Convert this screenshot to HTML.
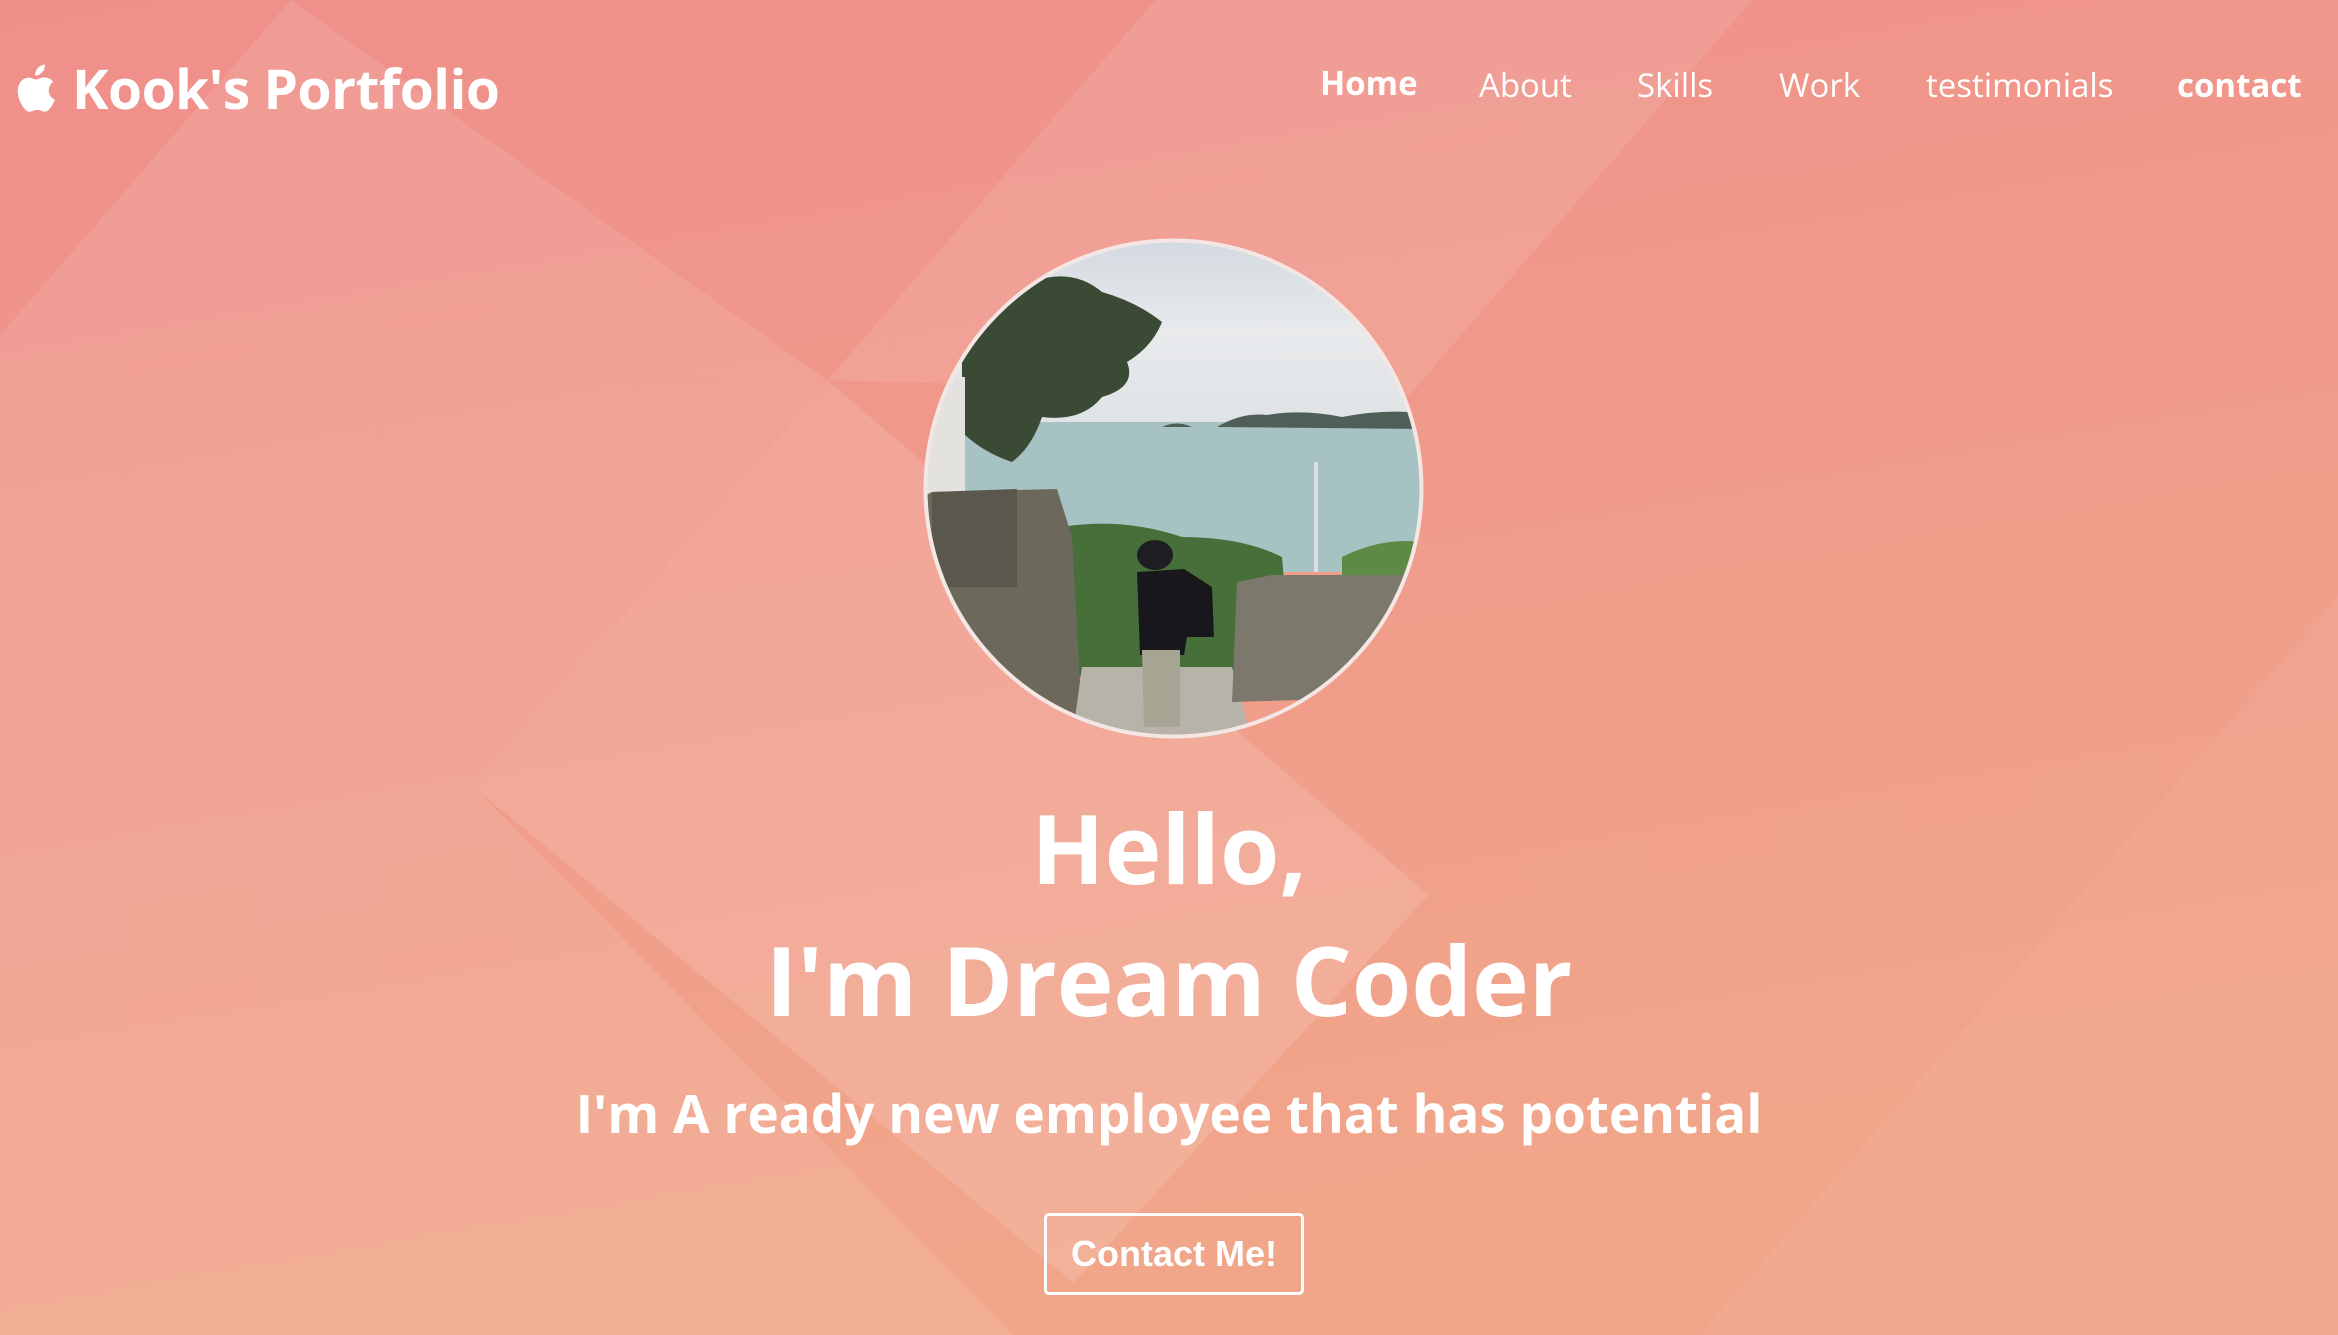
<!DOCTYPE html>
<html><head><meta charset="utf-8"><style>
html,body{margin:0;padding:0}
body{width:2338px;height:1335px;position:relative;overflow:hidden;font-family:"Open Sans","Liberation Sans",sans-serif;color:#fff}
.bg{position:absolute;left:0;top:0;width:2338px;height:1335px}
.logo{position:absolute;left:16px;top:51px;font-size:55px;font-weight:bold;letter-spacing:-0.5px;display:flex;align-items:center;white-space:nowrap}
.logo svg{margin-right:14px}
.nav a{position:absolute;top:62px;font-size:33px;color:#fff;text-decoration:none;white-space:nowrap}
.photo{position:absolute;left:922px;top:237px;width:503px;height:503px}
.h1{position:absolute;left:0;width:2338px;text-align:center;font-weight:bold;font-size:96px;line-height:1}
.sub{position:absolute;left:0;width:2338px;text-align:center;font-size:53px;font-weight:bold;top:1081px;line-height:1.2}
.btn{position:absolute;left:1044px;top:1213px;width:254px;height:76px;border:3px solid #fff;border-radius:5px;font-family:"Liberation Sans",Arial,sans-serif;font-weight:bold;font-size:36px;display:flex;align-items:center;justify-content:center}
</style></head><body>
<svg class="bg" viewBox="0 0 1568 895" preserveAspectRatio="none">
<defs><linearGradient id="g" x1="0" y1="0" x2="0.3" y2="1"><stop offset="0" stop-color="#ef8f8a"/><stop offset="1" stop-color="#f1a68a"/></linearGradient></defs>
<rect width="1568" height="895" fill="url(#g)"/>
<polygon points="0,225 195,0 555,255 318,528 680,895 0,895" fill="#fff" opacity="0.1"/>
<polygon points="775,0 1175,0 945,265 555,255" fill="#fff" opacity="0.1"/>
<polygon points="318,528 555,255 958,600 720,860" fill="#fff" opacity="0.13"/>
<polygon points="1568,400 1568,895 1140,895" fill="#fff" opacity="0.05"/>
</svg>
<div class="logo"><svg width="42" height="50" viewBox="0 0 24 28"><path fill="#fff" d="M16.5 0c.2 1.7-.5 3.3-1.5 4.4-1 1.2-2.6 2-4 1.9-.2-1.6.6-3.3 1.5-4.3C13.6.9 15.2.1 16.5 0zM21.6 9.7c-.2.1-2.9 1.7-2.9 5 0 3.9 3.4 5.3 3.5 5.3 0 .1-.5 1.9-1.8 3.7-1.1 1.6-2.2 3.2-4 3.2s-2.3-1-4.3-1-2.7 1-4.3 1.1c-1.7.1-3-1.7-4.1-3.3C1.5 20.5-.2 14.6 2.1 10.7c1.1-1.9 3.1-3.2 5.3-3.2 1.7 0 3.2 1.1 4.2 1.1s2.9-1.4 4.9-1.2c.8 0 3.2.3 4.7 2.5z"/></svg>Kook's Portfolio</div>
<div class="nav">
<a style="left:1320px;top:60px;font-weight:bold">Home</a>
<a style="left:1479px">About</a>
<a style="left:1637px">Skills</a>
<a style="left:1779px">Work</a>
<a style="left:1926px">testimonials</a>
<a style="left:2177px;font-weight:bold">contact</a>
</div>
<svg class="photo" viewBox="0 0 503 503">
<defs><clipPath id="c"><circle cx="251.5" cy="251.5" r="248"/></clipPath>
<linearGradient id="sky" x1="0" y1="0" x2="0" y2="1"><stop offset="0" stop-color="#d2d9e0"/><stop offset="0.5" stop-color="#e8eaec"/><stop offset="1" stop-color="#dfe3e6"/></linearGradient></defs>
<g clip-path="url(#c)">
<rect width="503" height="190" fill="url(#sky)"/>
<rect y="185" width="503" height="150" fill="#a6c2c3"/>
<path d="M295 190 Q320 175 345 178 Q380 172 420 180 Q460 172 500 176 L500 192 Z" fill="#4f5f58"/>
<path d="M240 190 Q255 183 270 190 Z" fill="#4f5f58"/>
<path d="M40 120 Q60 60 110 45 Q150 30 180 55 Q215 65 240 85 Q230 110 205 125 Q215 150 180 160 Q160 185 120 180 Q110 210 90 225 Q60 215 40 195 Z" fill="#3a4a35"/>
<rect x="5" y="140" width="38" height="120" fill="#e4e2de"/>
<path d="M140 290 Q200 280 260 300 Q320 300 360 320 L370 440 L140 440 Z" fill="#466f3a"/>
<path d="M420 320 Q460 300 500 305 L500 345 L420 345 Z" fill="#5d8a45"/>
<path d="M10 255 L135 252 L150 300 L160 480 L140 503 L0 503 L0 260 Z" fill="#6c685c"/>
<path d="M10 255 L95 252 L95 350 L10 350 Z" fill="#5a574d"/>
<path d="M160 430 L310 430 L330 503 L150 503 Z" fill="#b7b3a8"/>
<path d="M315 345 L350 338 L485 338 L480 460 L310 465 Z" fill="#7d786c"/>
<ellipse cx="233" cy="318" rx="18" ry="15" fill="#1e1e22"/>
<path d="M215 335 L262 332 L290 350 L292 400 L265 400 L262 418 L218 418 Z" fill="#18181c"/>
<path d="M220 413 L258 413 L258 490 L222 490 Z" fill="#a7a493"/>
<rect x="392" y="225" width="4" height="110" fill="#ddd"/>
</g>
<circle cx="251.5" cy="251.5" r="248" fill="none" stroke="#f3e6e4" stroke-width="4"/>
</svg>
<div class="h1" style="top:800px">Hello,</div>
<div class="h1" style="top:932px">I'm Dream Coder</div>
<div class="sub">I'm A ready new employee that has potential</div>
<div class="btn">Contact Me!</div>
</body></html>
